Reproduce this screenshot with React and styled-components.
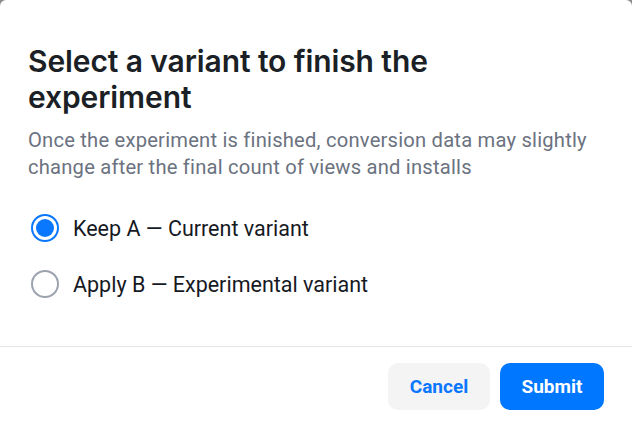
import React, { useState } from 'react';
import styled, { createGlobalStyle } from 'styled-components';

const GlobalStyle = createGlobalStyle`
  html, body {
    margin: 0;
    padding: 0;
    background: #8a8a8a;
  }
  #root {
    height: 422px;
  }
`;

const Dialog = styled.div`
  height: 422px;
  background: #fff;
  border-radius: 6px 6px 0 0;
  display: flex;
  flex-direction: column;
  box-sizing: border-box;
`;

const Body = styled.div`
  padding: 43px 28px 0 28px;
  flex: 1;
`;

const Title = styled.h2`
  margin: 0;
  font-family: Inter, "Open Sans", sans-serif;
  font-weight: 600;
  font-size: 30px;
  line-height: 36px;
  color: #1b1f26;
  letter-spacing: -0.1px;
  max-width: 460px;
`;

const Subtitle = styled.p`
  margin: 12px 0 0 0;
  font-family: Roboto, "Liberation Sans", sans-serif;
  font-size: 20.2px;
  line-height: 27px;
  letter-spacing: 0.2px;
  color: #6b7280;
`;

const Options = styled.div`
  margin-top: 33px;
  display: flex;
  flex-direction: column;
  gap: 28px;
`;

const Option = styled.label`
  display: flex;
  align-items: center;
  gap: 14px;
  height: 28px;
  cursor: pointer;
  font-family: Roboto, "Liberation Sans", sans-serif;
  font-size: 21.5px;
  color: #16191f;
`;

const Radio = styled.span`
  width: 28px;
  height: 28px;
  box-sizing: border-box;
  border-radius: 50%;
  margin-left: 3px;
  flex-shrink: 0;
  border: 2px solid ${(p) => (p.checked ? '#0a77ff' : '#9ca3af')};
  display: flex;
  align-items: center;
  justify-content: center;

  &::after {
    content: '';
    width: 18px;
    height: 18px;
    border-radius: 50%;
    background: ${(p) => (p.checked ? '#0a77ff' : 'transparent')};
  }
`;

const Footer = styled.div`
  border-top: 1px solid #e5e7eb;
  padding: 16px 28px 12px 28px;
  display: flex;
  justify-content: flex-end;
  gap: 10px;
`;

const Button = styled.button`
  height: 47px;
  padding: 0 18px;
  border: none;
  border-radius: 10px;
  font-family: Roboto, "Liberation Sans", sans-serif;
  font-weight: 700;
  font-size: 19px;
  cursor: pointer;
  background: ${(p) => (p.primary ? '#0077ff' : '#f4f4f5')};
  color: ${(p) => (p.primary ? '#fff' : '#0a77ff')};
  min-width: ${(p) => (p.primary ? '104px' : '102px')};
`;

const options = [
  { id: 'a', label: 'Keep A — Current variant' },
  { id: 'b', label: 'Apply B — Experimental variant' },
];

const App = () => {
  const [value, setValue] = useState('a');
  return (
    <>
      <GlobalStyle />
      <Dialog>
        <Body>
          <Title>Select a variant to finish the experiment</Title>
          <Subtitle>
            Once the experiment is finished, conversion data may slightly change after the final count of views and installs
          </Subtitle>
          <Options>
            {options.map((o) => (
              <Option key={o.id} onClick={() => setValue(o.id)}>
                <Radio checked={value === o.id} />
                {o.label}
              </Option>
            ))}
          </Options>
        </Body>
        <Footer>
          <Button>Cancel</Button>
          <Button primary>Submit</Button>
        </Footer>
      </Dialog>
    </>
  );
};

export default App;
